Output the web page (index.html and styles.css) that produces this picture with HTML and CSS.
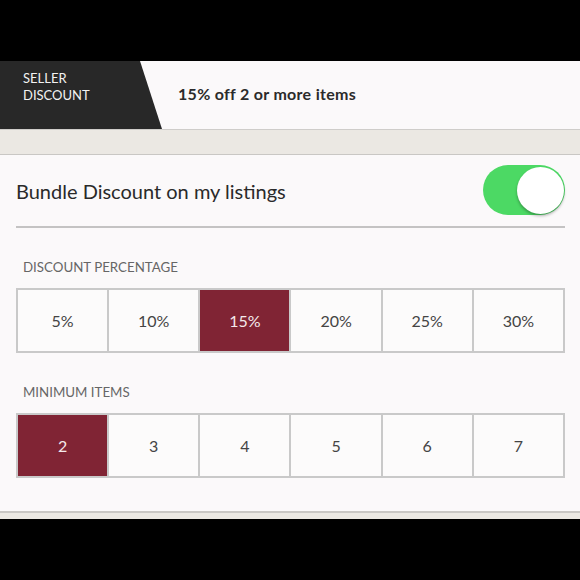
FILE: index.html
```html
<!DOCTYPE html>
<html>
<head>
<meta charset="utf-8">
<link rel="stylesheet" href="styles.css">
</head>
<body>
<div class="screen">
  <div class="topbar"></div>
  <header class="header">
    <div class="tab"><span>SELLER<br>DISCOUNT</span></div>
    <div class="summary">15% off 2 or more items</div>
  </header>
  <div class="band"></div>
  <section class="card">
    <div class="row">
      <span class="row-label">Bundle Discount on my listings</span>
      <span class="toggle"><span class="knob"></span></span>
    </div>
    <h2 class="section-title">DISCOUNT PERCENTAGE</h2>
    <div class="seg">
      <div class="cell">5%</div>
      <div class="cell">10%</div>
      <div class="cell active">15%</div>
      <div class="cell">20%</div>
      <div class="cell">25%</div>
      <div class="cell">30%</div>
    </div>
    <h2 class="section-title">MINIMUM ITEMS</h2>
    <div class="seg">
      <div class="cell active">2</div>
      <div class="cell">3</div>
      <div class="cell">4</div>
      <div class="cell">5</div>
      <div class="cell">6</div>
      <div class="cell">7</div>
    </div>
  </section>
  <div class="band band-bottom"></div>
</div>
</body>
</html>
```
FILE: styles.css
```css
html, body {
  margin: 0;
  padding: 0;
  background: #000;
}
.screen {
  width: 580px;
  height: 580px;
  background: #000;
  font-family: Lato, "Open Sans", sans-serif;
  color: #333;
}
.topbar {
  height: 61px;
}
.header {
  height: 69px;
  background: #fbf9fa;
  display: flex;
  align-items: center;
  border-bottom: 1px solid #cfcdca;
  box-sizing: border-box;
}
.tab {
  width: 162px;
  height: 100%;
  background: #282828;
  clip-path: polygon(0 0, 140px 0, 162px 100%, 0 100%);
  color: #f2f2f2;
  font-size: 13px;
  line-height: 17px;
  padding: 9px 0 0 23px;
  box-sizing: border-box;
}
.summary {
  margin-left: 16px;
  padding-bottom: 4px;
  font-size: 16px;
  font-weight: 700;
  letter-spacing: 0.3px;
  color: #2b2b2b;
}
.band {
  height: 24px;
  background: #ebe8e3;
  border-bottom: 1px solid #c9c7c4;
}
.card {
  background: #fbf9fa;
  height: 356px;
  padding: 0 15px 0 16px;
  box-sizing: border-box;
  overflow: hidden;
}
.row {
  height: 73px;
  display: flex;
  align-items: center;
  justify-content: space-between;
  border-bottom: 2px solid #c4c3c3;
  box-sizing: border-box;
}
.row-label {
  font-size: 20px;
  color: #2a2a2a;
}
.toggle {
  width: 82px;
  height: 50px;
  border-radius: 25px;
  background: #4cd964;
  display: flex;
  justify-content: flex-end;
  align-items: center;
  padding: 1px;
  box-sizing: border-box;
  margin-bottom: 1px;
}
.knob {
  width: 47px;
  height: 47px;
  border-radius: 50%;
  background: #fff;
  box-shadow: 0 2px 3px rgba(0,0,0,0.3);
}
.section-title {
  margin: 0;
  padding: 31px 0 0 7px;
  height: 60px;
  box-sizing: border-box;
  font-size: 13.3px;
  font-weight: 400;
  color: #666;
}
.seg {
  display: grid;
  grid-template-columns: repeat(6, 1fr);
  gap: 2px;
  padding: 2px;
  background: #c9c9c9;
  height: 65px;
  box-sizing: border-box;
}
.cell {
  background: #fcfbfb;
  display: flex;
  align-items: center;
  justify-content: center;
  font-size: 16px;
  color: #444;
}
.cell.active {
  background: #802434;
  color: #f4e9eb;
}
.band-bottom {
  height: 6px;
  border-top: 2px solid #c9c7c4;
  border-bottom: none;
}
```
